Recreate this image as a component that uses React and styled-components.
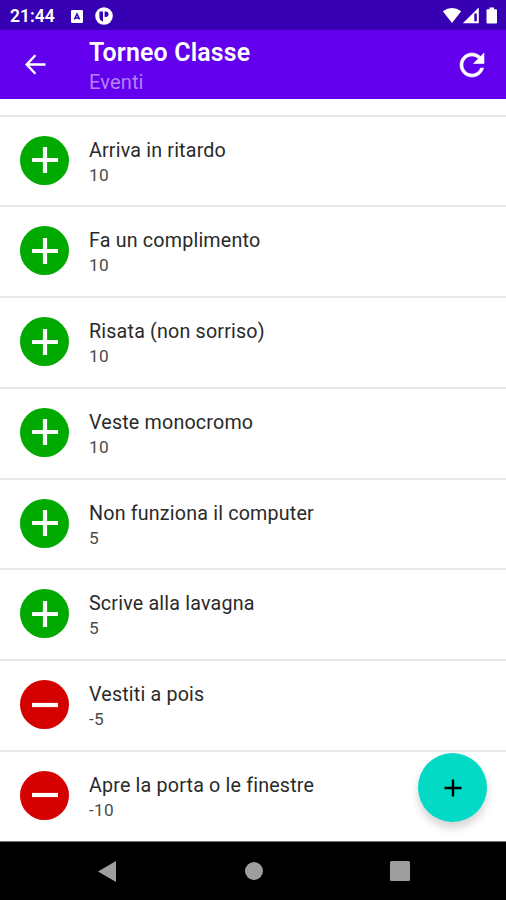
import React from 'react';
import styled, { createGlobalStyle } from 'styled-components';

const events = [
  { name: 'Arriva in ritardo', points: 10 },
  { name: 'Fa un complimento', points: 10 },
  { name: 'Risata (non sorriso)', points: 10 },
  { name: 'Veste monocromo', points: 10 },
  { name: 'Non funziona il computer', points: 5 },
  { name: 'Scrive alla lavagna', points: 5 },
  { name: 'Vestiti a pois', points: -5 },
  { name: 'Apre la porta o le finestre', points: -10 },
];

const GlobalStyle = createGlobalStyle`
  * {
    box-sizing: border-box;
  }
  body {
    margin: 0;
    font-family: Roboto, 'Liberation Sans', sans-serif;
  }
  button {
    display: flex;
    padding: 0;
    border: 0;
    background: none;
    cursor: pointer;
  }
  svg {
    display: block;
  }
`;

const Screen = styled.div`
  position: relative;
  display: flex;
  flex-direction: column;
  width: 506px;
  height: 900px;
  overflow: hidden;
  background: #fff;
`;

const StatusBar = styled.div`
  flex: none;
  display: flex;
  align-items: center;
  height: 30px;
  padding: 2px 8px 0 10px;
  background: #3700b3;
  color: #fff;
`;

const Clock = styled.span`
  width: 61px;
  font-size: 17.5px;
  font-weight: 600;
`;

const Notifications = styled.div`
  flex: 1;
  display: flex;
  align-items: center;
  gap: 12px;
`;

const SystemIcons = styled.div`
  display: flex;
  align-items: center;
`;

const Toolbar = styled.header`
  flex: none;
  display: flex;
  align-items: center;
  height: 69px;
  padding: 0 16px 0 23px;
  background: #6200ee;
  color: #fff;
`;

const Titles = styled.div`
  flex: 1;
  margin-left: 42px;
  padding-top: 5px;
`;

const Title = styled.h1`
  margin: 0;
  font-size: 24.9px;
  line-height: 30px;
  letter-spacing: 0.17px;
  font-weight: 600;
`;

const Subtitle = styled.div`
  font-size: 20px;
  line-height: 28px;
  letter-spacing: 0.15px;
  color: #b383f7;
`;

const List = styled.ul`
  flex: 1;
  min-height: 0;
  margin: 0;
  padding: 15.5px 0 0;
  list-style: none;
  overflow: hidden;
`;

const Row = styled.li`
  display: flex;
  align-items: center;
  height: 90.75px;
  padding: 0 0 1.5px 20px;
  border-top: 2px solid #e8e8e8;
`;

const Badge = styled.div`
  flex: none;
  display: flex;
  align-items: center;
  justify-content: center;
  width: 49px;
  height: 49px;
  margin-right: 20px;
  border-radius: 50%;
  background: ${(props) => (props.$negative ? '#d50000' : '#00aa00')};
`;

const Details = styled.div`
  padding-top: 4px;
`;

const EventName = styled.div`
  font-size: 19.7px;
  line-height: 25px;
  letter-spacing: 0.18px;
  color: #2a2a2a;
`;

const Points = styled.div`
  font-size: 17.2px;
  line-height: 24px;
  letter-spacing: 0.3px;
  color: #4a4a4a;
`;

const AddButton = styled.button`
  position: absolute;
  right: 19px;
  bottom: 78px;
  align-items: center;
  justify-content: center;
  width: 69px;
  height: 69px;
  border-radius: 50%;
  background: #03dac5 !important;
  box-shadow: 0 6px 9px rgba(0, 0, 0, 0.17);
`;

const NavBar = styled.nav`
  flex: none;
  display: grid;
  grid-template-columns: 147px 147px 146px;
  justify-content: center;
  justify-items: center;
  align-items: center;
  height: 59px;
  border-top: 1px solid #777;
  background: #000;
`;

function SignIcon({ negative }) {
  return (
    <svg width="26" height="26" viewBox="0 0 26 26" stroke="#fff" strokeWidth="4.2">
      <path d={negative ? 'M0 13H26' : 'M0 13H26M13 0V26'} />
    </svg>
  );
}

function EventRow({ event }) {
  const negative = event.points < 0;
  return (
    <Row>
      <Badge $negative={negative}>
        <SignIcon negative={negative} />
      </Badge>
      <Details>
        <EventName>{event.name}</EventName>
        <Points>{event.points}</Points>
      </Details>
    </Row>
  );
}

export default function App() {
  return (
    <Screen>
      <GlobalStyle />
      <StatusBar>
        <Clock>21:44</Clock>
        <Notifications>
          <svg width="12" height="13" viewBox="0 0 12 13">
            <rect width="12" height="13" rx="1.2" fill="#fff" />
            <path d="M3.4 9.4L6 4L8.6 9.4M4.6 8H7.4" fill="none" stroke="#3700b3" strokeWidth="1.5" />
          </svg>
          <svg width="18" height="18" viewBox="0 0 18 18">
            <circle cx="9" cy="9" r="8.8" fill="#fff" />
            <path d="M4.4 4.5H8V14.5Q4.4 13.5 4.4 10ZM9.6 4.5H11Q13.6 4.8 13.6 7.2T11 10H9.6Z" fill="#3700b3" />
          </svg>
        </Notifications>
        <SystemIcons>
          <svg width="56" height="18" viewBox="0 0 56 18" fill="#fff">
            <path d="M0.8 4.3Q10-2.3 19.2 4.3L10 16Z" />
            <path d="M36.8 0.5V16.3H20.8Z" />
            <path d="M32.3 6.5H34.8V14.3H32.3Z" fill="#3700b3" />
            <path d="M45.5 2.3H47.5V0.4H52V2.3H54Q55 2.3 55 3.3V15.4Q55 16.4 54 16.4H45.5Q44.5 16.4 44.5 15.4V3.3Q44.5 2.3 45.5 2.3Z" />
          </svg>
        </SystemIcons>
      </StatusBar>
      <Toolbar>
        <button aria-label="Indietro">
          <svg width="24" height="24" viewBox="0 0 24 24" fill="none" stroke="#fff" strokeWidth="2.4">
            <path d="M22.5 11.5H4M12.4 2.3L3.7 11.5L12.4 20.7" />
          </svg>
        </button>
        <Titles>
          <Title>Torneo Classe</Title>
          <Subtitle>Eventi</Subtitle>
        </Titles>
        <button aria-label="Aggiorna">
          <svg width="36" height="36" viewBox="0 0 24 24" fill="#fff" stroke="#fff" strokeWidth="0.4">
            <path d="M17.65 6.35C16.2 4.9 14.21 4 12 4c-4.42 0-7.99 3.58-7.99 8s3.57 8 7.99 8c3.73 0 6.84-2.55 7.73-6h-2.08c-.82 2.33-3.04 4-5.65 4-3.31 0-6-2.69-6-6s2.69-6 6-6c1.66 0 3.14.69 4.22 1.78L13 11h7V4l-2.35 2.35z" />
          </svg>
        </button>
      </Toolbar>
      <List>
        {events.map((event) => (
          <EventRow key={event.name} event={event} />
        ))}
      </List>
      <AddButton aria-label="Aggiungi evento">
        <svg width="18" height="18" viewBox="0 0 18 18" stroke="#000" strokeWidth="2.4">
          <path d="M0.5 9H17.5M9 0.5V17.5" />
        </svg>
      </AddButton>
      <NavBar>
        <svg width="18" height="21" viewBox="0 0 18 21" fill="#9e9e9e">
          <path d="M0 10.5L18 0V21Z" />
        </svg>
        <svg width="18" height="18" viewBox="0 0 18 18" fill="#9e9e9e">
          <circle cx="9" cy="9" r="9" />
        </svg>
        <svg width="20" height="20" viewBox="0 0 20 20" fill="#9e9e9e">
          <rect width="20" height="20" rx="1.5" />
        </svg>
      </NavBar>
    </Screen>
  );
}
